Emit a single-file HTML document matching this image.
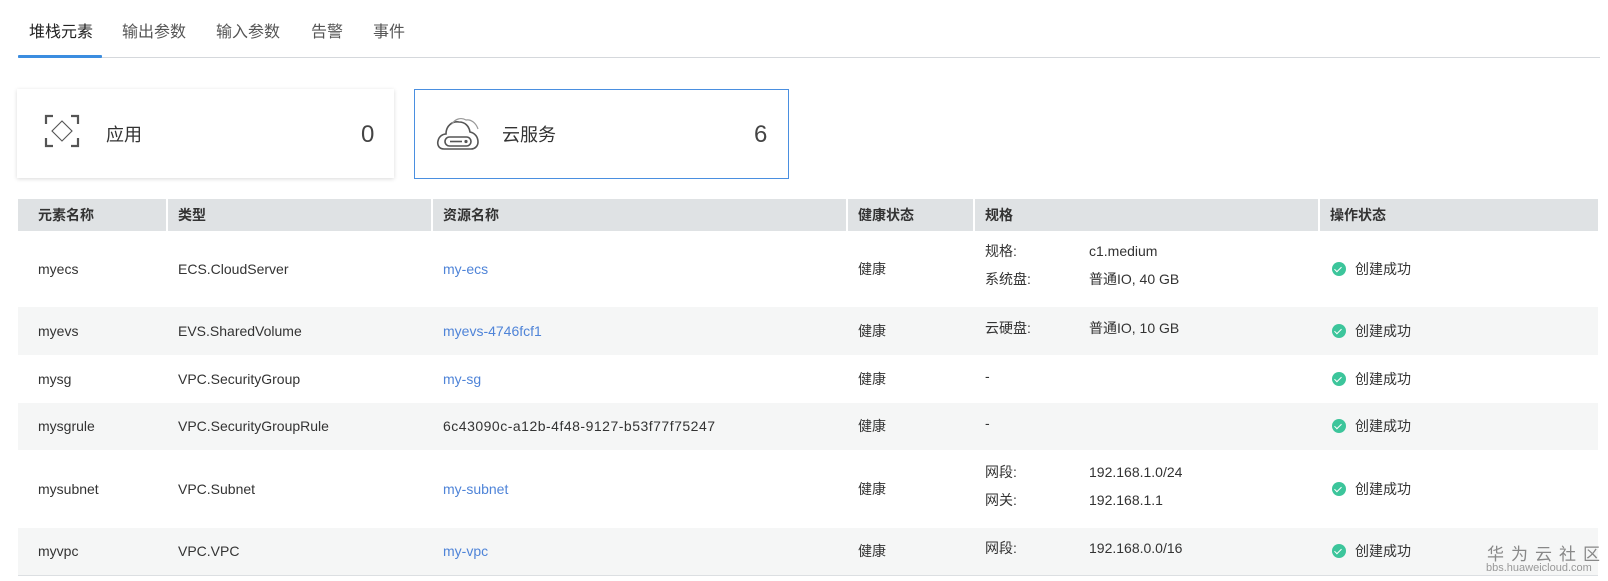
<!DOCTYPE html>
<html><head><meta charset="utf-8"><style>
*{margin:0;padding:0;box-sizing:border-box}
body{width:1608px;height:581px;background:#fff;font-family:"Liberation Sans","Noto Sans CJK SC",sans-serif;color:#333;position:relative;overflow:hidden}
.a{position:absolute;white-space:nowrap}
.tab{position:absolute;top:21px;font-size:16px;color:#555;line-height:24px}
.row{position:absolute;left:18px;width:1580px}
.c{position:absolute;font-size:14px;line-height:20px;color:#333;white-space:nowrap}
.h{font-weight:bold;color:#333}
.lnk{color:#4f84d8}
.ok{position:absolute;left:1332px;width:14px;height:14px;border-radius:50%;background:#3cc59b}
.ok:after{content:"";position:absolute;left:4px;top:3px;width:3px;height:6px;border:solid #fff;border-width:0 1.6px 1.6px 0;transform:rotate(45deg)}
</style></head><body>
<div class="tab" style="left:29px;color:#222">堆栈元素</div>
<div class="tab" style="left:122px">输出参数</div>
<div class="tab" style="left:216px">输入参数</div>
<div class="tab" style="left:311px">告警</div>
<div class="tab" style="left:373px">事件</div>
<div class="a" style="left:18px;top:57px;width:1582px;height:1px;background:#d5d8dc"></div>
<div class="a" style="left:18px;top:55px;width:84px;height:3px;background:#3b8de0;border-radius:1px"></div>

<div class="a" style="left:17px;top:89px;width:377px;height:89px;background:#fff;box-shadow:0 1px 4px rgba(0,0,0,.15)"></div>
<svg class="a" style="left:44px;top:114px" width="36" height="34" viewBox="0 0 36 34" fill="none" stroke="#555" stroke-width="2.2">
<path d="M9 2H2V10M27 2H34V10M2 24V32H9M34 24V32H27"/>
<path d="M18 7L28 17L18 27L8 17Z" stroke-width="1.1"/>
</svg>
<div class="a" style="left:106px;top:121px;font-size:18px;color:#333">应用</div>
<div class="a" style="left:361px;top:121px;font-size:24px;color:#444">0</div>

<div class="a" style="left:414px;top:89px;width:375px;height:90px;border:1px solid #4a8fe0;background:#fff"></div>
<svg class="a" style="left:436px;top:114px" width="46" height="38" viewBox="0 0 46 38" fill="none" stroke="#555" stroke-width="1.6">
<path d="M8 35C3 35 1 31 2 27C3 22 7 20 10 20C10 12 16 7 23 8C29 8 33 12 34 18C39 19 42 23 42 28C42 32 39 35 35 35Z"/>
<path d="M16 10C19 5 25 3 30 6C35 5 40 9 42 15" stroke="#999" stroke-width="1.2"/>
<rect x="9" y="23" width="26" height="9" rx="4.5"/>
<path d="M14 27.5H26"/><circle cx="30" cy="27.5" r="0.8" fill="#555"/>
</svg>
<div class="a" style="left:502px;top:121px;font-size:18px;color:#333">云服务</div>
<div class="a" style="left:754px;top:121px;font-size:24px;color:#444">6</div>

<div class="row" style="top:199px;height:32px;background:#dfe2e4"></div>
<div class="a" style="left:166px;top:199px;width:2px;height:32px;background:#fff"></div>
<div class="a" style="left:431px;top:199px;width:2px;height:32px;background:#fff"></div>
<div class="a" style="left:846px;top:199px;width:2px;height:32px;background:#fff"></div>
<div class="a" style="left:973px;top:199px;width:2px;height:32px;background:#fff"></div>
<div class="a" style="left:1318px;top:199px;width:2px;height:32px;background:#fff"></div>
<div class="c h" style="left:38px;top:205px">元素名称</div>
<div class="c h" style="left:178px;top:205px">类型</div>
<div class="c h" style="left:443px;top:205px">资源名称</div>
<div class="c h" style="left:858px;top:205px">健康状态</div>
<div class="c h" style="left:985px;top:205px">规格</div>
<div class="c h" style="left:1330px;top:205px">操作状态</div>

<div class="row" style="top:307px;height:48px;background:#f5f6f6"></div>
<div class="row" style="top:403px;height:47px;background:#f5f6f6"></div>
<div class="row" style="top:528px;height:47px;background:#f5f6f6"></div>
<div class="row" style="top:575px;height:1px;background:#dcdfe2"></div>

<div class="c" style="left:38px;top:259px">myecs</div>
<div class="c" style="left:178px;top:259px">ECS.CloudServer</div>
<div class="c lnk" style="left:443px;top:259px">my-ecs</div>
<div class="c" style="left:858px;top:259px">健康</div>
<div class="c" style="left:985px;top:241px">规格:</div><div class="c" style="left:1089px;top:241px">c1.medium</div>
<div class="c" style="left:985px;top:269px">系统盘:</div><div class="c" style="left:1089px;top:269px">普通IO, 40 GB</div>
<div class="ok" style="top:262px"></div><div class="c" style="left:1355px;top:259px">创建成功</div>

<div class="c" style="left:38px;top:321px">myevs</div>
<div class="c" style="left:178px;top:321px">EVS.SharedVolume</div>
<div class="c lnk" style="left:443px;top:321px">myevs-4746fcf1</div>
<div class="c" style="left:858px;top:321px">健康</div>
<div class="c" style="left:985px;top:318px">云硬盘:</div><div class="c" style="left:1089px;top:318px">普通IO, 10 GB</div>
<div class="ok" style="top:324px"></div><div class="c" style="left:1355px;top:321px">创建成功</div>

<div class="c" style="left:38px;top:369px">mysg</div>
<div class="c" style="left:178px;top:369px">VPC.SecurityGroup</div>
<div class="c lnk" style="left:443px;top:369px">my-sg</div>
<div class="c" style="left:858px;top:369px">健康</div>
<div class="c" style="left:985px;top:366px">-</div>
<div class="ok" style="top:372px"></div><div class="c" style="left:1355px;top:369px">创建成功</div>

<div class="c" style="left:38px;top:416px">mysgrule</div>
<div class="c" style="left:178px;top:416px">VPC.SecurityGroupRule</div>
<div class="c" style="left:443px;top:416px;letter-spacing:0.5px">6c43090c-a12b-4f48-9127-b53f77f75247</div>
<div class="c" style="left:858px;top:416px">健康</div>
<div class="c" style="left:985px;top:413px">-</div>
<div class="ok" style="top:419px"></div><div class="c" style="left:1355px;top:416px">创建成功</div>

<div class="c" style="left:38px;top:479px">mysubnet</div>
<div class="c" style="left:178px;top:479px">VPC.Subnet</div>
<div class="c lnk" style="left:443px;top:479px">my-subnet</div>
<div class="c" style="left:858px;top:479px">健康</div>
<div class="c" style="left:985px;top:462px">网段:</div><div class="c" style="left:1089px;top:462px">192.168.1.0/24</div>
<div class="c" style="left:985px;top:490px">网关:</div><div class="c" style="left:1089px;top:490px">192.168.1.1</div>
<div class="ok" style="top:482px"></div><div class="c" style="left:1355px;top:479px">创建成功</div>

<div class="c" style="left:38px;top:541px">myvpc</div>
<div class="c" style="left:178px;top:541px">VPC.VPC</div>
<div class="c lnk" style="left:443px;top:541px">my-vpc</div>
<div class="c" style="left:858px;top:541px">健康</div>
<div class="c" style="left:985px;top:538px">网段:</div><div class="c" style="left:1089px;top:538px">192.168.0.0/16</div>
<div class="ok" style="top:544px"></div><div class="c" style="left:1355px;top:541px">创建成功</div>

<div class="a" style="left:1487px;top:540px;font-size:17px;color:#888;letter-spacing:7px">华为云社区</div>
<div class="a" style="left:1486px;top:562px;font-size:11px;color:#999">bbs.huaweicloud.com</div>
</body></html>
